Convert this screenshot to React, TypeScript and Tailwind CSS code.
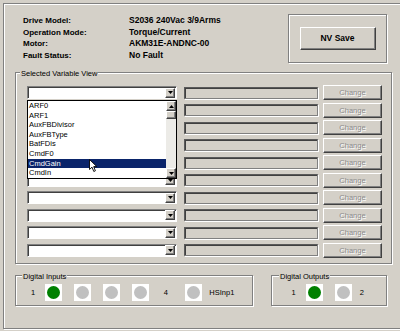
const items = ["ARF0", "ARF1", "AuxFBDivisor", "AuxFBType", "BatFDis", "CmdF0", "CmdGain", "CmdIn"];

const etched = "border border-[#808080] shadow-[inset_1px_1px_0_#fff,1px_1px_0_#fff]";
const raised =
  "border border-t-white border-l-white border-b-[#404040] border-r-[#404040] shadow-[inset_-1px_-1px_0_#808080]";
const sunken =
  "border border-t-[#808080] border-l-[#808080] border-b-white border-r-white shadow-[inset_1px_1px_0_#404040]";

function Arrow({ up }: { up?: boolean }) {
  return (
    <div className={`flex h-[10px] w-[10px] items-center justify-center bg-[#d4d0c8] ${raised}`}>
      <svg width="5" height="3" viewBox="0 0 5 3">
        <path d={up ? "M0 3h5L2.5 0z" : "M0 0h5L2.5 3z"} fill="#000" />
      </svg>
    </div>
  );
}

function Led({ on }: { on?: boolean }) {
  return (
    <div className="flex h-[17px] w-[17px] shrink-0 items-center justify-center bg-white">
      <div className={`h-[13px] w-[13px] rounded-full ${on ? "bg-[#008000]" : "bg-[#c0c0c0]"}`} />
    </div>
  );
}

function Row() {
  return (
    <div className="flex h-[17.5px] items-center">
      <div className={`flex h-[13px] w-[150px] items-center justify-end bg-white pr-[1px] ${sunken}`}>
        <Arrow />
      </div>
      <div
        className="ml-[7px] h-[12px] w-[134px] border border-[#5a5a5a] border-b-[#808080] border-r-[#808080] bg-[#d4d0c8] shadow-[inset_1px_1px_0_#404040,1px_1px_0_#fff]"
      />
      <div
        className={`ml-[5px] flex h-[15px] w-[59px] items-center justify-center text-[7.5px] text-[#8a8a8a] [text-shadow:1px_1px_0_#fff] ${raised}`}
      >
        Change
      </div>
    </div>
  );
}

export default function App() {
  return (
    <div className="h-[331px] w-[400px] overflow-hidden bg-[#d4d0c8] pl-[3px] pt-[3px] font-['Liberation_Sans',Arial,sans-serif] text-black">
      <div className={`h-[326px] w-[420px] ${etched}`}>
        <div className="flex w-[396px]">
          <div className="w-[284px] pl-[19px] pt-[11px]">
            <div className="grid grid-cols-[106px_auto] font-bold leading-[11.5px]">
              <span className="text-[8px]">Drive Model:</span>
              <span className="text-[8.5px]">S2036 240Vac 3/9Arms</span>
              <span className="text-[8px]">Operation Mode:</span>
              <span className="text-[8.5px]">Torque/Current</span>
              <span className="text-[8px]">Motor:</span>
              <span className="text-[8.5px]">AKM31E-ANDNC-00</span>
              <span className="text-[8px]">Fault Status:</span>
              <span className="text-[8.5px]">No Fault</span>
            </div>
          </div>
          <div className={`mt-[10px] flex h-[49px] w-[99px] items-center justify-center ${etched}`}>
            <div className={`flex h-[23px] w-[76px] items-center justify-center text-[8.5px] font-bold ${raised}`}>
              NV Save
            </div>
          </div>
        </div>

        <div className={`relative ml-[11px] mt-[9px] h-[192px] w-[377px] pl-[11px] pt-[11px] ${etched}`}>
          <span className="absolute left-[4px] top-[-4px] bg-[#d4d0c8] px-[1px] text-[7.5px] leading-[9px]">
            Selected Variable View
          </span>
          {Array.from({ length: 10 }).map((_, i) => (
            <Row key={i} />
          ))}

          <div className="absolute left-[11px] top-[27px] flex h-[79px] w-[150px] border border-black bg-white">
            <div className="relative flex-1">
              {items.map((t) => (
                <div
                  key={t}
                  className={`h-[9.6px] pl-[1px] text-[7.5px] leading-[9.6px] ${
                    t === "CmdGain" ? "bg-[#0a246a] text-white" : ""
                  }`}
                >
                  {t}
                </div>
              ))}
              <svg className="absolute left-[61px] top-[58px]" width="9" height="14" viewBox="0 0 9 14">
                <path
                  d="M0.5 0.5 L0.5 10.5 L3 8.2 L4.8 12.5 L6.4 11.8 L4.7 7.6 L7.8 7.6 Z"
                  fill="#fff"
                  stroke="#000"
                  strokeWidth="0.9"
                  strokeLinejoin="round"
                />
              </svg>
            </div>
            <div className="flex w-[10px] flex-col">
              <Arrow up />
              <div className={`h-[8px] w-[10px] bg-[#d4d0c8] ${raised}`} />
              <div className="flex-1 bg-[#ecebe7]" />
              <Arrow />
            </div>
          </div>
        </div>

        <div className="ml-[11px] mt-[11px] flex">
          <div className={`relative flex h-[31px] w-[238px] items-center pl-[15px] pt-[4px] text-[7.5px] ${etched}`}>
            <span className="absolute left-[6px] top-[-4px] bg-[#d4d0c8] px-[1px] leading-[9px]">Digital Inputs</span>
            <span>1</span>
            <div className="ml-[10px]">
              <Led on />
            </div>
            <div className="ml-[11.5px]">
              <Led />
            </div>
            <div className="ml-[12px]">
              <Led />
            </div>
            <div className="ml-[12px]">
              <Led />
            </div>
            <span className="ml-[15px]">4</span>
            <div className="ml-[17px]">
              <Led />
            </div>
            <span className="ml-[7.5px]">HSInp1</span>
          </div>
          <div className={`relative ml-[18px] flex h-[31px] w-[116px] items-center pl-[19.5px] pt-[4px] text-[7.5px] ${etched}`}>
            <span className="absolute left-[7px] top-[-4px] bg-[#d4d0c8] px-[1px] leading-[9px]">Digital Outputs</span>
            <span>1</span>
            <div className="ml-[10px]">
              <Led on />
            </div>
            <div className="ml-[12px]">
              <Led />
            </div>
            <span className="ml-[8px]">2</span>
          </div>
        </div>
      </div>
    </div>
  );
}
